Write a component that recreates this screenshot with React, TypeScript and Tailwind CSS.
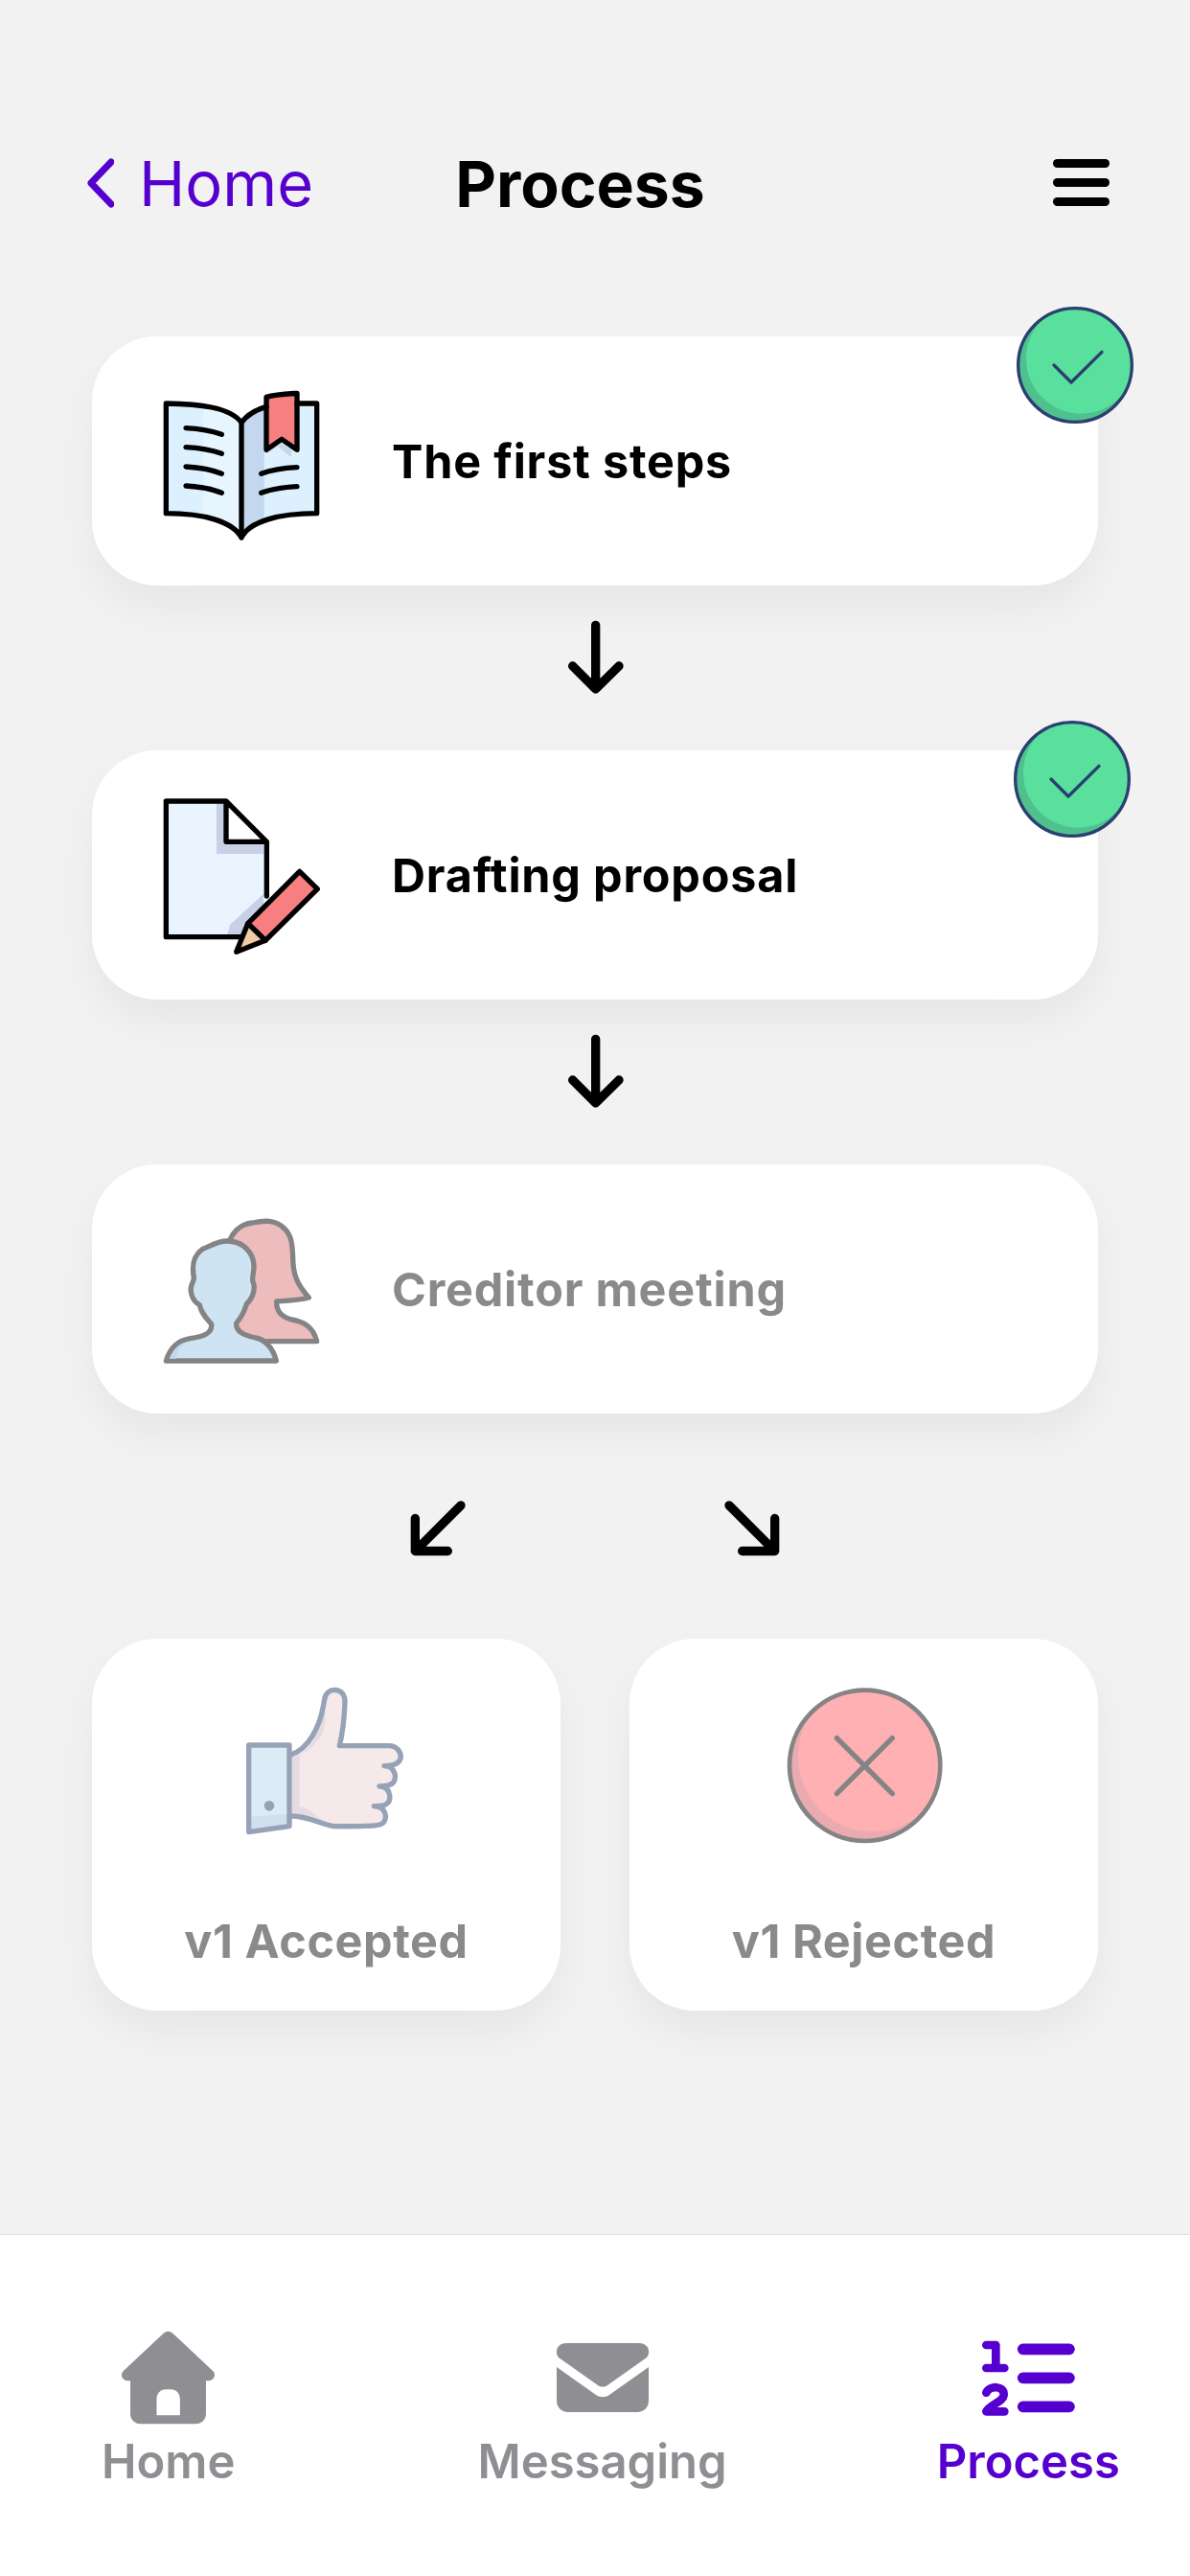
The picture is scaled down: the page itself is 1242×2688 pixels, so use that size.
const FONT = "font-['Inter','Noto_Sans',sans-serif]";

function BookIcon() {
  return (
    <svg viewBox="0 0 660 600" className="h-[200px] w-[220px] shrink-0" fill="none" strokeLinecap="round" strokeLinejoin="round">
      <path d="M100 120C200 122 300 130 336 180V540C310 490 220 464 100 464Z" fill="#e7f5ff" />
      <path d="M100 120C140 120 180 123 217 130V472C180 466 140 464 100 464Z" fill="#dcf0fe" />
      <path d="M336 180C370 140 420 125 470 120H572V464C450 464 360 490 336 540Z" fill="#dcf0fe" />
      <path d="M336 180C355 160 380 145 407 138V486C375 495 350 510 336 540Z" fill="#c3d7ee" />
      <path d="M407 285L462 245L492 265V288L447 252Z" fill="#c3d7ee" />
      <path d="M414 100C440 92 480 90 510 88V265L462 232L414 265Z" fill="#f67f7f" />
      <g stroke="#000" strokeWidth="16">
        <path d="M336 180C300 130 200 122 100 120V464C220 464 310 490 336 540V180C350 160 380 140 414 130M510 120H572V464C450 464 360 490 336 540" />
        <path d="M414 100C440 92 480 90 510 88V265L462 232L414 265Z" />
        <path d="M162 197C200 199 240 205 274 217M162 257C200 259 240 265 274 277M162 318C200 320 240 326 274 340M162 378C200 380 240 386 274 400M398 340C430 328 470 322 510 320M398 400C430 388 470 382 510 380" />
      </g>
    </svg>
  );
}

function DocIcon() {
  return (
    <svg viewBox="0 0 660 600" className="-mt-[6px] h-[200px] w-[220px] shrink-0" fill="none" strokeLinecap="round" strokeLinejoin="round">
      <path d="M100 78H288L415 205V503H100Z" fill="#eaf4ff" />
      <path d="M258 85H288V205H405V243H258Z" fill="#c8d0e8" />
      <path d="M292 495L300 465L405 368V420L345 495Z" fill="#c8d0e8" />
      <path d="M288 78V205H415Z" fill="#fff" />
      <g stroke="#000" strokeWidth="16">
        <path d="M350 503H100V78H288L415 205V375M288 78V205H415" />
        <path d="M518 298L574 353L411 514L356 461Z" fill="#f67f7f" />
        <path d="M356 461L411 514L320 550Z" fill="#f0cba5" />
      </g>
    </svg>
  );
}

function PeopleIcon() {
  return (
    <svg viewBox="0 0 660 600" className="mt-[10px] h-[200px] w-[220px] shrink-0" fill="none" strokeLinecap="round" strokeLinejoin="round" stroke="#848484" strokeWidth="16">
      <path d="M300 130C320 90 350 80 370 78C410 70 440 68 470 95C495 120 495 150 497 185C497 240 510 270 547 312C520 320 480 322 446 324C445 350 455 370 490 380C530 388 560 400 572 449H320L280 130Z" fill="#edbcbd" stroke="none" />
      <path d="M300 130C320 90 350 80 370 78C410 70 440 68 470 95C495 120 495 150 497 185C497 240 510 270 547 312C520 320 480 322 446 324C445 350 455 370 490 380C530 388 560 400 572 449H380" />
      <path d="M100 510C115 460 145 445 175 440C215 435 245 425 242 395C225 375 210 360 205 335C185 325 175 300 178 280C182 262 188 258 187 250C180 210 185 180 215 160C240 150 260 135 290 135C340 135 375 170 375 215C375 235 368 250 372 262C380 280 375 310 352 332C345 355 335 375 320 392C318 420 345 430 380 438C410 443 435 470 445 510Z" fill="#cfe4f3" />
      <path d="M110 503C125 470 140 458 160 452C145 465 135 485 132 503Z" fill="#c3d7ee" stroke="none" />
    </svg>
  );
}

function ThumbIcon() {
  return (
    <svg viewBox="0 0 660 600" className="h-[200px] w-[220px] shrink-0" fill="none" strokeLinecap="round" strokeLinejoin="round">
      <path d="M220 272C270 255 310 190 322 105C325 80 340 70 355 70C375 70 388 85 387 110C385 160 380 205 370 245H525C550 245 562 265 562 280C560 295 545 308 510 308L525 310C545 320 548 345 540 358C535 365 520 372 495 372L510 375C530 385 532 415 520 425C510 435 495 434 478 434L495 437C515 445 518 470 510 482C505 495 490 498 350 497C310 490 270 465 220 465Z" fill="#f5e9e9" />
      <path d="M222 280L245 272V435C285 440 300 478 350 490L222 462ZM322 130C330 160 325 190 312 215C300 235 275 262 245 275C285 250 310 190 322 130Z" fill="#e7dbe3" />
      <path d="M220 272C270 255 310 190 322 105C325 80 340 70 355 70C375 70 388 85 387 110C385 160 380 205 370 245H525C550 245 562 265 562 280C560 295 545 308 510 308L525 310C545 320 548 345 540 358C535 365 520 372 495 372L510 375C530 385 532 415 520 425C510 435 495 434 478 434L495 437C515 445 518 470 510 482C505 495 490 498 350 497C310 490 270 465 220 465" stroke="#96a2b5" strokeWidth="16" />
      <path d="M86 243H213V497L86 515Z" fill="#dcecf7" />
      <path d="M93 467L207 458V492L93 508Z" fill="#d0deed" />
      <path d="M86 243H213V497L86 515Z" stroke="#96a2b5" strokeWidth="16" />
      <circle cx="150" cy="433" r="16" fill="#96a2b5" />
    </svg>
  );
}

function RejectIcon() {
  return (
    <svg viewBox="0 0 660 600" className="-ml-[2px] h-[200px] w-[220px] shrink-0" fill="none" strokeLinecap="round">
      <clipPath id="reject-clip">
        <circle cx="335" cy="307" r="236" />
      </clipPath>
      <circle cx="335" cy="307" r="236" fill="#eaabb0" />
      <circle cx="360" cy="280" r="234" fill="#ffb0b3" clipPath="url(#reject-clip)" />
      <circle cx="335" cy="307" r="236" stroke="#848484" strokeWidth="14" />
      <path d="M247 221L421 395M421 221L247 395" stroke="#848484" strokeWidth="16" />
    </svg>
  );
}

function CheckBadge({ id, className }: { id: string; className: string }) {
  return (
    <svg viewBox="54 65 366 366" className={`absolute h-[122px] w-[122px] ${className}`} fill="none" strokeLinecap="round" strokeLinejoin="round">
      <clipPath id={id}>
        <circle cx="237" cy="248" r="178" />
      </clipPath>
      <circle cx="237" cy="248" r="178" fill="#50c08e" />
      <circle cx="256" cy="228" r="172" fill="#5ae09d" clipPath={`url(#${id})`} />
      <circle cx="237" cy="248" r="178" stroke="#2a3f72" strokeWidth="10" />
      <path d="M171 248L225 302L321 207" stroke="#2a3f72" strokeWidth="10" />
    </svg>
  );
}

function ArrowDown() {
  return (
    <div className="flex h-[172px] justify-center pt-[18px]">
      <svg viewBox="0 0 360 360" className="h-[120px] w-[120px]" fill="none" stroke="#000" strokeWidth="28" strokeLinecap="round" strokeLinejoin="round">
        <path d="M182 70V270M110 198L182 270L255 198" />
      </svg>
    </div>
  );
}

function StepCard({ icon, title, muted, badge }: { icon: React.ReactNode; title: string; muted?: boolean; badge?: React.ReactNode }) {
  return (
    <div className="relative flex h-[260px] items-center rounded-[68px] bg-white pl-[44px] shadow-[0_22px_44px_rgba(0,0,0,0.05)]">
      {icon}
      <span className={`ml-[49px] mt-[2px] text-[48.5px] font-bold tracking-[0.8px] ${muted ? 'text-[#8a8a8a]' : 'text-black'}`}>{title}</span>
      {badge}
    </div>
  );
}

function OutcomeCard({ icon, title }: { icon: React.ReactNode; title: string }) {
  return (
    <div className="flex h-[388px] w-[489px] flex-col items-center rounded-[68px] bg-white pt-[30px] shadow-[0_22px_44px_rgba(0,0,0,0.05)]">
      {icon}
      <span className="mt-[56px] text-[48.5px] leading-[60px] font-bold tracking-[0.6px] text-[#8a8a8a]">{title}</span>
    </div>
  );
}

export default function App() {
  return (
    <div className={`flex h-[2688px] w-[1242px] flex-col bg-[#f2f2f2] ${FONT}`}>
      {/* Header */}
      <div className="flex h-[351px] items-start pt-[152px]">
        <svg viewBox="0 0 28 52" className="ml-[91px] mt-[13px] h-[52px] w-[28px]" fill="none" stroke="#5600d0" strokeWidth="7" strokeLinecap="round" strokeLinejoin="round">
          <path d="M25 4L4 26L25 48" />
        </svg>
        <span className="ml-[26px] text-[65px] leading-[80px] text-[#5600d0]">Home</span>
        <span className="ml-[148px] text-[66px] leading-[80px] font-bold text-black">Process</span>
        <div className="ml-auto mr-[84px] mt-[14px] flex w-[59px] flex-col gap-[11px]">
          <div className="h-[9px] rounded-full bg-black" />
          <div className="h-[9px] rounded-full bg-black" />
          <div className="h-[9px] rounded-full bg-black" />
        </div>
      </div>

      {/* Steps */}
      <div className="flex flex-1 flex-col px-[96px]">
        <StepCard icon={<BookIcon />} title="The first steps" badge={<CheckBadge id="badge-one" className="right-[-37px] top-[-31px]" />} />
        <ArrowDown />
        <StepCard icon={<DocIcon />} title="Drafting proposal" badge={<CheckBadge id="badge-two" className="right-[-34px] top-[-31px]" />} />
        <ArrowDown />
        <StepCard icon={<PeopleIcon />} title="Creditor meeting" muted />
        <div className="flex h-[235px] gap-[255px] pl-[324px] pt-[85px]">
          <svg viewBox="120 60 225 200" className="h-[67px] w-[75px]" fill="none" stroke="#000" strokeWidth="28" strokeLinecap="round" strokeLinejoin="round">
            <path d="M303 92L160 235M160 133V235H262" />
          </svg>
          <svg viewBox="1110 60 225 200" className="h-[67px] w-[75px]" fill="none" stroke="#000" strokeWidth="28" strokeLinecap="round" strokeLinejoin="round">
            <path d="M1143 92L1286 235M1286 133V235H1184" />
          </svg>
        </div>
        <div className="flex gap-[72px]">
          <OutcomeCard icon={<ThumbIcon />} title="v1 Accepted" />
          <OutcomeCard icon={<RejectIcon />} title="v1 Rejected" />
        </div>
      </div>

      {/* Tab bar */}
      <div className="flex h-[357px] border-t border-[#dcdcdc] bg-white pl-[106px] pt-[98px] text-[49px] leading-[56px] font-semibold text-[#8e8e93]">
        <div className="flex flex-col items-center">
          <div className="flex h-[102px] items-center">
            <svg viewBox="66 30 320 305" className="h-[102px] w-[107px]" fill="#8e8e93">
              <path fillRule="evenodd" d="M210 46C220 36 232 36 242 46L364 160C378 172 370 192 352 192H344V295C344 315 330 327 312 327H140C122 327 108 315 108 295V192H100C82 192 74 172 88 160ZM190 300H263V250C263 230 250 219 235 219H218C203 219 190 230 190 250Z" />
            </svg>
          </div>
          <span className="mt-[9px]">Home</span>
        </div>
        <div className="ml-[253px] flex flex-col items-center">
          <div className="flex h-[102px] items-center">
            <svg viewBox="0 0 96 72" className="h-[72px] w-[96px]" fill="#8e8e93">
              <path d="M10 0H86C95 0 99 9 94 15L53 44C50 46 46 46 43 44L2 15C-3 9 1 0 10 0Z" />
              <path d="M0 25L41 54C45 57 51 57 55 54L96 25V60C96 68 90 72 84 72H12C6 72 0 68 0 60Z" />
            </svg>
          </div>
          <span className="mt-[9px]">Messaging</span>
        </div>
        <div className="ml-[219px] flex flex-col items-center text-[#5600d0]">
          <div className="flex h-[102px] items-center">
            <svg viewBox="180 55 315 255" className="h-[85px] w-[105px]" fill="none" stroke="#5600d0" strokeLinecap="round" strokeLinejoin="round">
              <path d="M320 92H465M320 182H465M320 272H465" strokeWidth="35" />
              <path d="M205 79H235V150M205 151H262M205 228C215 205 262 205 260 235C258 258 215 265 205 287H262" strokeWidth="26" />
            </svg>
          </div>
          <span className="mt-[9px]">Process</span>
        </div>
      </div>
    </div>
  );
}
